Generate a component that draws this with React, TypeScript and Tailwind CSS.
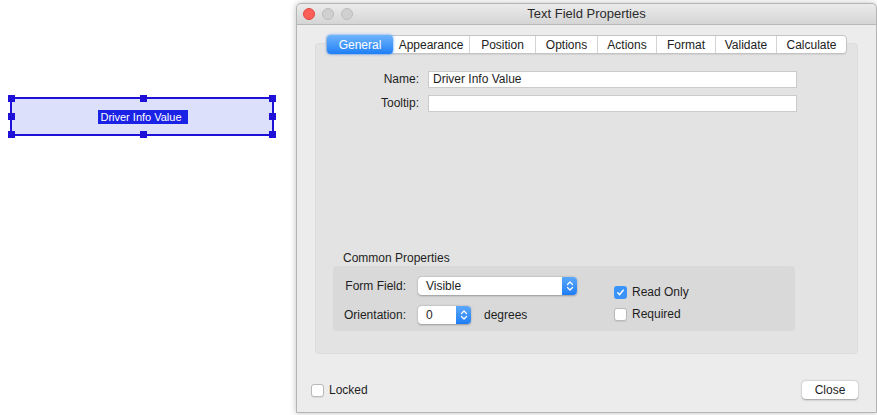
import React from "react";

const font = { fontFamily: '"Liberation Sans", Arial, sans-serif' };

const tabs = ["General", "Appearance", "Position", "Options", "Actions", "Format", "Validate", "Calculate"];
const tabWidths = ["w-[66px]", "w-[76px]", "w-[66px]", "w-[62px]", "w-[59px]", "w-[59px]", "w-[61px]", "w-[70px]"];

function Handle({ className }: { className: string }) {
  return <div className={`absolute w-[7px] h-[7px] bg-[#1f10d8] ${className}`} />;
}

function Stepper({ className = "" }: { className?: string }) {
  return (
    <div className={`flex items-center justify-center bg-gradient-to-b from-[#5aa8fb] to-[#1d7df5] rounded-r-[4px] ${className}`}>
      <svg width="8" height="12" viewBox="0 0 8 12" fill="none" stroke="white" strokeWidth="1.3" strokeLinecap="round" strokeLinejoin="round">
        <path d="M1.5 4.5 L4 2 L6.5 4.5" />
        <path d="M1.5 7.5 L4 10 L6.5 7.5" />
      </svg>
    </div>
  );
}

function Checkbox({ checked = false }: { checked?: boolean }) {
  return checked ? (
    <div className="w-[13px] h-[13px] rounded-[3px] bg-[#3b93f7] flex items-center justify-center">
      <svg width="9" height="9" viewBox="0 0 9 9" fill="none" stroke="white" strokeWidth="1.5" strokeLinecap="round" strokeLinejoin="round">
        <path d="M1.8 4.8 L3.6 6.6 L7.2 2.2" />
      </svg>
    </div>
  ) : (
    <div className="w-[13px] h-[13px] rounded-[3px] bg-white border border-[#b9b9b9] shadow-[0_1px_1px_rgba(0,0,0,0.08)]" />
  );
}

export default function App() {
  return (
    <div className="w-[877px] h-[415px] bg-white overflow-hidden flex text-[#1e1e1e]" style={font}>
      {/* canvas with selected field */}
      <div className="w-[296px] shrink-0 flex flex-col">
        <div className="relative ml-[10px] mt-[97px] w-[264px] h-[39px] bg-[#dde0fb] border-2 border-[#1f10d8] flex items-center justify-center">
          <span className="bg-[#1a22e6] text-white text-[11px] leading-[14px] pl-[2px] pr-[6px] ml-[2px]">Driver Info Value</span>
          <Handle className="-left-[4px] -top-[4px]" />
          <Handle className="left-[128px] -top-[4px]" />
          <Handle className="-right-[4px] -top-[4px]" />
          <Handle className="-left-[4px] top-[14px]" />
          <Handle className="-right-[4px] top-[14px]" />
          <Handle className="-left-[4px] -bottom-[4px]" />
          <Handle className="left-[128px] -bottom-[4px]" />
          <Handle className="-right-[4px] -bottom-[4px]" />
        </div>
      </div>

      {/* dialog window */}
      <div className="mt-[3px] w-[581px] h-[410px] shrink-0 bg-[#ececec] rounded-t-[5px] border border-[#b4b4b4] shadow-[0_0_6px_rgba(0,0,0,0.25)] flex flex-col">
        <div className="h-[21px] shrink-0 flex items-center px-[6px] rounded-t-[5px] bg-gradient-to-b from-[#ebebeb] to-[#d5d5d5] border-b border-[#b8b8b8]">
          <div className="flex gap-[7px]">
            <div className="w-[12px] h-[12px] rounded-full bg-[#fc5f57] border border-[#e2463f]" />
            <div className="w-[12px] h-[12px] rounded-full bg-[#d0d0d0] border border-[#bdbdbd]" />
            <div className="w-[12px] h-[12px] rounded-full bg-[#d0d0d0] border border-[#bdbdbd]" />
          </div>
          <div className="flex-1 text-center text-[13px] text-[#2b2b2b] -ml-[50px]">Text Field Properties</div>
        </div>

        <div className="flex-1 flex flex-col px-[18px] pt-[18px]">
          {/* tab panel */}
          <div className="w-[543px] h-[311px] bg-[#e3e3e3] rounded-[4px] border border-[#dcdcdc] flex flex-col">
            <div className="flex -mt-[9px] ml-[10px]">
              <div className="flex rounded-[4px] border border-[#c4c4c4] bg-white shadow-[0_1px_1px_rgba(0,0,0,0.08)]">
                {tabs.map((t, i) => (
                  <div
                    key={t}
                    className={`${tabWidths[i]} h-[17px] flex items-center justify-center text-[12px] ${
                      i === 0
                        ? "bg-gradient-to-b from-[#6db4fb] to-[#1b7ff6] text-white rounded-[4px] shadow-[0_0_3px_rgba(40,130,250,0.8)] -my-[1px] h-[19px]"
                        : "border-l border-[#d4d4d4] text-[#222]"
                    } ${i === 1 ? "border-l-0" : ""}`}
                  >
                    {t}
                  </div>
                ))}
              </div>
            </div>

            <div className="grid grid-cols-[103px_369px] gap-x-[9px] gap-y-[6px] mt-[16px] items-center">
              <div className="text-right text-[12px]">Name:</div>
              <div className="h-[17px] bg-white border border-[#cbcbcb] text-[12px] flex items-center px-[4px]">Driver Info Value</div>
              <div className="text-right text-[12px]">Tooltip:</div>
              <div className="h-[17px] bg-white border border-[#cbcbcb]" />
            </div>

            <div className="mt-auto mb-[22px] ml-[17px]">
              <div className="text-[12px] leading-[14px] ml-[10px] mb-[1px]">Common Properties</div>
              <div className="w-[462px] h-[65px] bg-[#d9d9d9] rounded-[4px] flex">
                <div className="w-[282px] flex flex-col gap-[11px] pt-[10px]">
                  <div className="flex items-center gap-[12px] mt-[1px]">
                    <div className="w-[73px] text-right text-[12px]">Form Field:</div>
                    <div className="flex h-[18px] w-[159px] rounded-[4px] bg-white shadow-[0_0.5px_2px_rgba(0,0,0,0.3)]">
                      <div className="flex-1 text-[12px] flex items-center pl-[8px]">Visible</div>
                      <Stepper className="w-[15px]" />
                    </div>
                  </div>
                  <div className="flex items-center gap-[12px]">
                    <div className="w-[73px] text-right text-[12px]">Orientation:</div>
                    <div className="flex h-[18px] w-[53px] rounded-[4px] bg-white shadow-[0_0.5px_2px_rgba(0,0,0,0.3)]">
                      <div className="flex-1 text-[12px] flex items-center pl-[8px]">0</div>
                      <Stepper className="w-[15px]" />
                    </div>
                    <div className="text-[12px] ml-[1px]">degrees</div>
                  </div>
                </div>
                <div className="flex flex-col gap-[8px] pt-[19px] -ml-[1px]">
                  <div className="flex items-center gap-[5px] text-[12px] leading-[14px]">
                    <Checkbox checked />
                    <span>Read Only</span>
                  </div>
                  <div className="flex items-center gap-[5px] text-[12px] leading-[14px]">
                    <Checkbox />
                    <span>Required</span>
                  </div>
                </div>
              </div>
            </div>
          </div>

          <div className="flex items-center justify-between mt-[27px] -ml-[4px]">
            <div className="flex items-center gap-[5px] text-[12px]">
              <Checkbox />
              <span>Locked</span>
            </div>
            <div className="w-[56px] h-[18px] bg-white rounded-[4px] shadow-[0_0.5px_2px_rgba(0,0,0,0.35)] text-[12px] flex items-center justify-center">
              Close
            </div>
          </div>
        </div>
      </div>
    </div>
  );
}
